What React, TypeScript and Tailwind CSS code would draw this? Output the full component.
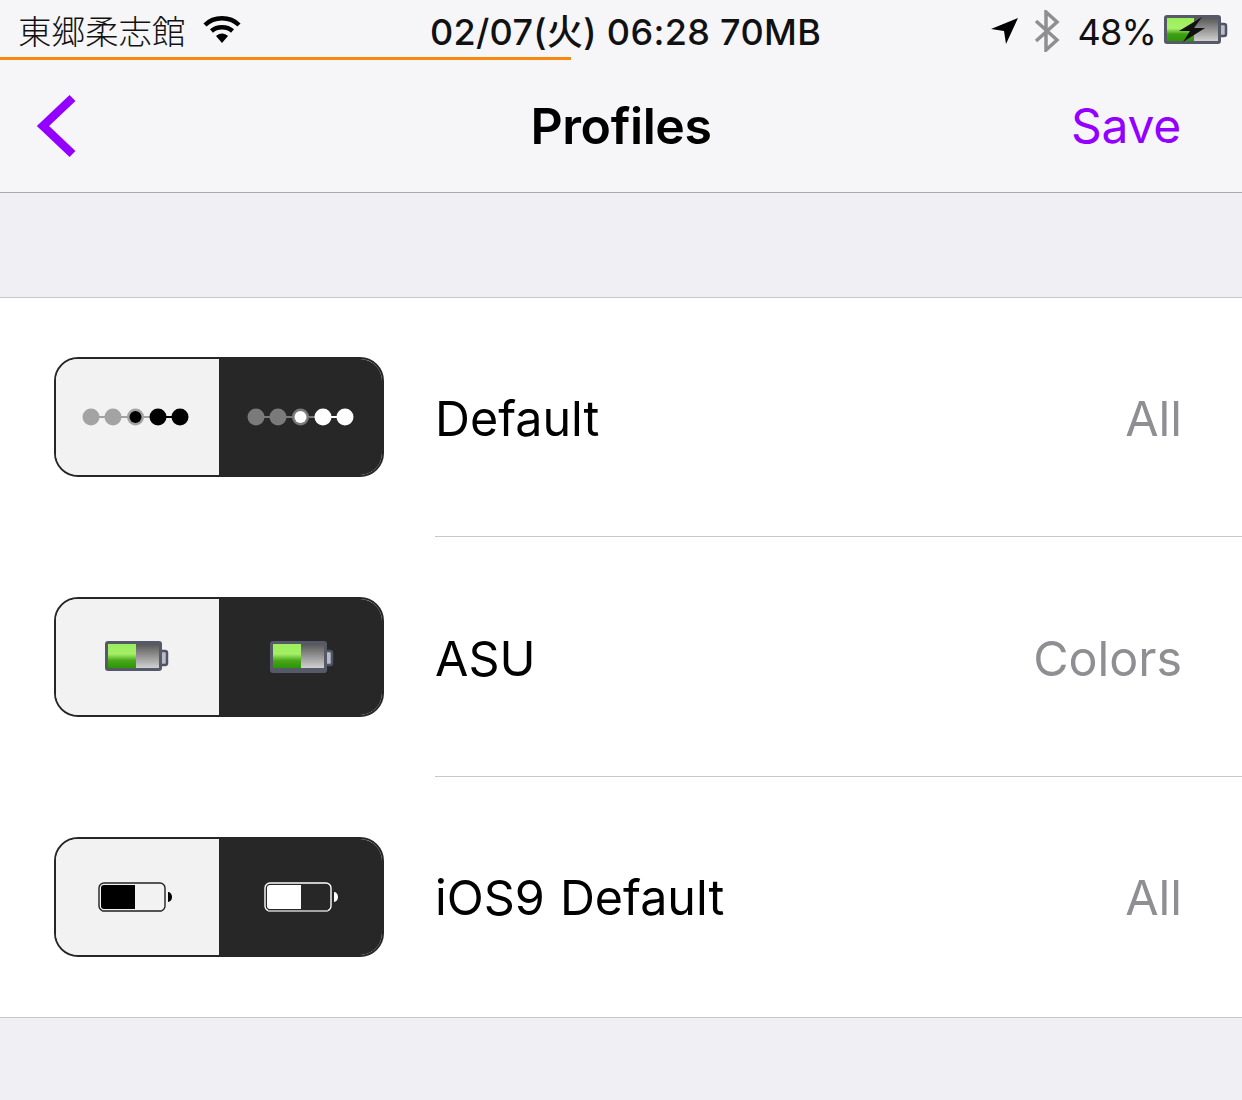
const sans = "font-['Inter','Noto_Sans_CJK_JP',sans-serif]";

function Dots({ dim, solid }: { dim: string; solid: string }) {
  return (
    <svg width="110" height="22" viewBox="0 0 110 22" className="block">
      <line x1="9" y1="11" x2="75" y2="11" stroke={dim} strokeWidth="2" />
      <line x1="75" y1="11" x2="97" y2="11" stroke={solid} strokeWidth="2" />
      <circle cx="9" cy="11" r="8.5" fill={dim} />
      <circle cx="31" cy="11" r="8.5" fill={dim} />
      <circle cx="53.5" cy="11" r="8.5" fill={dim} />
      <circle cx="53.5" cy="11" r="6" fill={solid} />
      <circle cx="76" cy="11" r="8.5" fill={solid} />
      <circle cx="98" cy="11" r="8.5" fill={solid} />
    </svg>
  );
}

function GelBattery({ id, tall }: { id: string; tall?: boolean }) {
  const h = tall ? 32 : 30;
  return (
    <svg width="64" height="34" viewBox="0 0 64 34" className="block">
      <defs>
        <linearGradient id={`${id}g`} x1="0" y1="0" x2="0" y2="1">
          <stop offset="0" stopColor="#9bef5c" />
          <stop offset="0.42" stopColor="#a4ee66" />
          <stop offset="0.7" stopColor="#45a518" />
          <stop offset="1" stopColor="#2c9606" />
        </linearGradient>
        <linearGradient id={`${id}e`} x1="0" y1="0" x2="0" y2="1">
          <stop offset="0" stopColor="#575757" />
          <stop offset="1" stopColor="#d0d0d0" />
        </linearGradient>
      </defs>
      <rect x="55" y="11" width="7" height="14" rx="2" fill="#b9bcc8" stroke="#4f5363" strokeWidth="2.5" />
      <rect x="0" y="1" width="57" height={h} rx="3" fill="#565a68" />
      <rect x="3" y="4" width="51" height="24" fill={`url(#${id}e)`} />
      <rect x="3" y="4" width="28" height="24" fill={`url(#${id}g)`} />
    </svg>
  );
}

function PlainBattery({ color }: { color: string }) {
  return (
    <svg width="74" height="30" viewBox="0 0 74 30" className="block">
      <rect x="1" y="1" width="66" height="28" rx="5" fill="none" stroke={color === "#000" ? "#222" : "#fff"} strokeWidth="1.4" />
      <line x1="4" y1="29" x2="64" y2="29" stroke={color === "#000" ? "#555" : "#999"} strokeWidth="1.6" />
      <path d="M3 6 a3 3 0 0 1 3 -3 H37 V27 H6 a3 3 0 0 1 -3 -3 Z" fill={color} />
      <path d="M70 10 a4 5 0 0 1 0 10 Z" fill={color} />
    </svg>
  );
}

function Thumb({ left, right }: { left: React.ReactNode; right: React.ReactNode }) {
  return (
    <div className="flex h-[120px] w-[330px] shrink-0 overflow-hidden rounded-[24px] border-2 border-[#262626]">
      <div className="flex w-[163px] items-center justify-center bg-[#f2f2f2] pr-[2px]">{left}</div>
      <div className="flex flex-1 items-center justify-center bg-[#272727] pl-[2px]">{right}</div>
    </div>
  );
}

function Row({ thumb, name, value, last }: { thumb: React.ReactNode; name: string; value: string; last?: boolean }) {
  return (
    <div className="flex h-[240px] items-stretch pl-[54px]">
      <div className="flex items-center">{thumb}</div>
      <div className={`ml-[51px] flex flex-1 items-center justify-between pr-[60px] ${last ? "pt-[2px]" : "border-b border-[#c8c7cc] pt-[5px]"}`}>
        <span className="text-[48.4px] leading-none tracking-normal [word-spacing:1.5px] text-black">{name}</span>
        <span className="text-[48.4px] leading-none tracking-normal text-[#8e8e93]">{value}</span>
      </div>
    </div>
  );
}

export default function App() {
  return (
    <div className={`${sans} h-[1100px] w-[1242px] overflow-hidden bg-[#efeff4]`}>
      <div className="bg-[#f6f6f9]">
        <div className="grid h-[57px] grid-cols-[1fr_auto_1fr] items-center pl-[18px] pr-[14px] pt-[6px]">
          <div className="flex items-center gap-[17px]">
            <span className="mb-[4px] font-['Noto_Sans_CJK_JP',sans-serif] text-[33.5px] font-light leading-none text-[#111]">東郷柔志館</span>
            <svg width="38" height="28" viewBox="0 0 38 28" className="mb-[4px] block">
              <path d="M2 9 C11 0 27 0 36 9" fill="none" stroke="#000" strokeWidth="4.5" />
              <path d="M8.5 15 C14 10 24 10 29.5 15" fill="none" stroke="#000" strokeWidth="4.5" />
              <path d="M13 20 C16.5 16.5 21.5 16.5 25 20 L19 27 Z" fill="#000" />
            </svg>
          </div>
          <span className="ml-[5px] text-[36px] font-medium leading-none tracking-[0.33px] text-[#111]">02/07(火) 06:28 70MB</span>
          <div className="flex items-center justify-end">
            <svg width="28" height="28" viewBox="0 0 28 28" className="mb-[2px] block">
              <path d="M0 12 L27 1 L15 27 L13 14 Z" fill="#000" />
            </svg>
            <svg width="26" height="42" viewBox="0 0 26 42" className="ml-[15px] mb-[2px] block">
              <path d="M2 11 L23 30 L12 40 V2 L23 12 L2 31" fill="none" stroke="#8f8f92" strokeWidth="3.5" />
            </svg>
            <span className="ml-[18px] text-[36px] leading-none tracking-[-0.8px] text-[#111]">48%</span>
            <svg width="64" height="32" viewBox="0 0 64 32" className="mb-[3px] ml-[8px] block">
              <defs>
                <linearGradient id="sg" x1="0" y1="0" x2="0" y2="1">
                  <stop offset="0" stopColor="#9bef5c" />
                  <stop offset="0.45" stopColor="#a8f06a" />
                  <stop offset="0.7" stopColor="#3f9f16" />
                  <stop offset="1" stopColor="#2c9606" />
                </linearGradient>
                <linearGradient id="se" x1="0" y1="0" x2="0" y2="1">
                  <stop offset="0" stopColor="#575757" />
                  <stop offset="1" stopColor="#d0d0d0" />
                </linearGradient>
              </defs>
              <rect x="55" y="10" width="7" height="12" rx="2" fill="#b9bcc8" stroke="#4f5363" strokeWidth="2.5" />
              <rect x="0" y="1" width="57" height="29" rx="3" fill="#565a68" />
              <rect x="3" y="4" width="51" height="23" fill="url(#se)" />
              <rect x="3" y="4" width="27" height="23" fill="url(#sg)" />
              <path d="M38 3 L15 17 H26 L19 28 L41 14 H30 Z" fill="#111" />
            </svg>
          </div>
        </div>
        <div className="h-[3px] w-[571px] bg-[#f58a0f]" />
        <div className="relative flex h-[133px] items-center justify-between border-b border-[#a9a9ad] pl-[36px] pr-[61px]">
          <svg width="42" height="64" viewBox="0 0 42 64" className="block">
            <path d="M36.5 4 L7 32 L36.5 60" fill="none" stroke="#9400ff" strokeWidth="8.5" />
          </svg>
          <span className="absolute inset-x-0 text-center text-[50px] font-semibold leading-none tracking-[-0.4px] text-black">Profiles</span>
          <span className="text-[48px] leading-none tracking-[-0.25px] text-[#9400ff]">Save</span>
        </div>
      </div>
      <div className="mt-[104px] border-y border-[#c8c7cc] bg-white">
        <div className="-mt-px">
          <Row
            name="Default"
            value="All"
            thumb={<Thumb left={<Dots dim="#a3a3a3" solid="#000" />} right={<Dots dim="#7a7a7a" solid="#fff" />} />}
          />
          <Row
            name="ASU"
            value="Colors"
            thumb={<Thumb left={<GelBattery id="a" />} right={<GelBattery id="b" tall />} />}
          />
          <Row
            last
            name="iOS9 Default"
            value="All"
            thumb={
              <Thumb
                left={<div className="mr-[4px]"><PlainBattery color="#000" /></div>}
                right={<div className="mr-[2px]"><PlainBattery color="#fff" /></div>}
              />
            }
          />
        </div>
      </div>
    </div>
  );
}
